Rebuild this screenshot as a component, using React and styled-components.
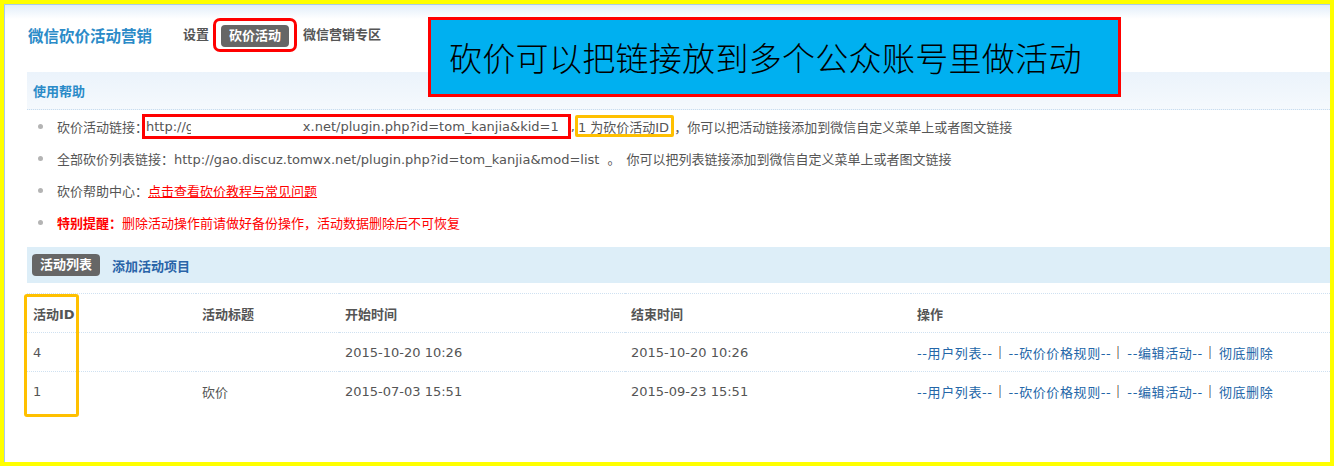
import React from 'react';
import styled, { createGlobalStyle } from 'styled-components';

const GlobalStyle = createGlobalStyle`
    body {
        margin: 0;
        background: #fff;
        font-family: "DejaVu Sans", "Noto Sans CJK SC", sans-serif;
        font-size: 13px;
        color: #555;
    }
`;

const Frame = styled.div`
    width: 1334px;
    height: 466px;
    box-sizing: border-box;
    border: 4px solid #ffff00;
    overflow: hidden;
`;

const Page = styled.div`
    position: relative;
    height: 100%;
    box-sizing: border-box;
    border-left: 1px solid #a9cbe9;
    border-top: 1px solid #a9cbe9;
    background: linear-gradient(#e2eefa, #fff 14px);
`;

const Header = styled.header`
    display: flex;
    align-items: center;
    height: 60px;
    padding-left: 23px;
`;

const Title = styled.h1`
    margin: 0 31px 0 0;
    font-size: 15.5px;
    font-weight: bold;
    color: #2b8bc8;
`;

const Nav = styled.nav`
    display: flex;
    align-items: center;
    gap: 4px;
`;

const NavItem = styled.span`
    font-size: 13px;
    font-weight: bold;
    line-height: 22px;
    height: 22px;
    padding: ${props => (props.active ? '0 8px' : '0')};
    border-radius: 4px;
    color: ${props => (props.active ? '#fff' : '#555')};
    background: ${props => (props.active ? '#666' : 'transparent')};
`;

const Marked = styled.span`
    display: flex;
    padding: 4px 5px 2px 5px;
    margin-left: 0;
    margin-right: 2px;
    border: 3px solid #ff0000;
    border-radius: 7px;
`;

const Callout = styled.div`
    position: absolute;
    left: 423px;
    top: 12px;
    width: 693px;
    height: 80px;
    box-sizing: border-box;
    display: flex;
    align-items: center;
    padding-left: 18px;
    border: 3px solid #ff0000;
    background: #00b0f0;
    color: #000;
    font-family: "Noto Sans CJK SC", sans-serif;
    font-size: 33px;
    font-weight: 300;
    letter-spacing: 0.3px;
`;

const Content = styled.div`
    padding: 7px 0 0 22px;
`;

const SectionBar = styled.div`
    height: 38px;
    box-sizing: border-box;
    display: flex;
    align-items: center;
    padding-left: 6px;
    border-bottom: 1px dotted #c8dcee;
    background: linear-gradient(#ebf3fb, #f5f9fd);
    color: #2b8bc8;
    font-weight: bold;
`;

const HelpList = styled.ul`
    margin: 0;
    padding: 0;
    list-style: none;
`;

const HelpItem = styled.li`
    display: flex;
    align-items: center;
    height: 32px;
    padding-left: 11px;
    white-space: nowrap;

    &::before {
        content: '';
        width: 5px;
        height: 5px;
        margin-right: 14px;
        border-radius: 50%;
        background: #b4b4b4;
    }
`;

const UrlBox = styled.span`
    display: inline-flex;
    align-items: center;
    height: 25px;
    box-sizing: border-box;
    margin-left: -6px;
    padding: 0 9px 0 1px;
    border: 3px solid #ff0000;
`;

const Clip = styled.span`
    display: inline-block;
    width: ${props => props.w}px;
    overflow: hidden;
`;

const Blank = styled.span`
    display: inline-block;
    width: ${props => props.w}px;
`;

const IdBox = styled.span`
    display: inline-flex;
    align-items: center;
    height: 22px;
    box-sizing: border-box;
    padding: 0 2px 0 0;
    border: 3px solid #ffc000;
    border-radius: 2px;
`;

const RedLink = styled.a`
    color: #ff0000;
    text-decoration: underline;
`;

const Warn = styled.span`
    color: #ff0000;
    font-weight: ${props => (props.strong ? 'bold' : 'normal')};
`;

const Gap = styled.span`
    display: inline-block;
    width: ${props => props.w}px;
`;

const TabBar = styled.div`
    display: flex;
    align-items: center;
    gap: 12px;
    height: 36px;
    margin-top: 9px;
    padding-left: 5px;
    background: #ddeef8;
    font-weight: bold;
`;

const Badge = styled.span`
    height: 22px;
    line-height: 22px;
    padding: 0 8px;
    border-radius: 4px;
    background: #666;
    color: #fff;
`;

const TabLink = styled.a`
    color: #2a64a8;
`;

const TableWrap = styled.div`
    position: relative;
    margin-top: 10px;
`;

const Table = styled.table`
    width: 100%;
    border-collapse: collapse;
    table-layout: fixed;
`;

const Cell = styled.td`
    height: 38px;
    padding: 0 0 0 6px;
    border-top: 1px dotted #cfe1f1;
    white-space: nowrap;
    font-weight: ${props => (props.head ? 'bold' : 'normal')};
    color: #555;
`;

const Actions = styled.span`
    display: inline-flex;
    align-items: center;
    letter-spacing: 0.6px;
`;

const Action = styled.a`
    color: #2366a8;
`;

const Sep = styled.span`
    width: 2px;
    height: 13px;
    margin: 0 8px 0 6px;
    background: linear-gradient(to right, #f0b27a 50%, #84b8e6 50%);
`;

const ColumnMark = styled.div`
    position: absolute;
    left: -3px;
    top: 1px;
    width: 55px;
    height: 123px;
    box-sizing: border-box;
    border: 3px solid #ffc000;
    border-radius: 3px;
    pointer-events: none;
`;

const columns = [169, 143, 286, 286, null];

const rows = [
    { id: '4', title: '', start: '2015-10-20 10:26', end: '2015-10-20 10:26' },
    { id: '1', title: '砍价', start: '2015-07-03 15:51', end: '2015-09-23 15:51' }
];

const actionNames = ['--用户列表--', '--砍价价格规则--', '--编辑活动--', '彻底删除'];

const ActionList = () => (
    <Actions>
        {actionNames.map((name, i) => (
            <React.Fragment key={name}>
                {i > 0 && <Sep />}
                <Action>{name}</Action>
            </React.Fragment>
        ))}
    </Actions>
);

const App = () => (
    <>
        <GlobalStyle />
        <Frame>
            <Page>
                <Header>
                    <Title>微信砍价活动营销</Title>
                    <Nav>
                        <NavItem>设置</NavItem>
                        <Marked><NavItem active>砍价活动</NavItem></Marked>
                        <NavItem>微信营销专区</NavItem>
                    </Nav>
                </Header>
                <Callout>砍价可以把链接放到多个公众账号里做活动</Callout>
                <Content>
                    <SectionBar>使用帮助</SectionBar>
                    <HelpList>
                        <HelpItem>
                            砍价活动链接：
                            <UrlBox>
                                http://<Clip w={5}>g</Clip><Blank w={112} />x.net/plugin.php?id=tom_kanjia&amp;kid=1
                            </UrlBox>
                            ,
                            <IdBox>1 为砍价活动ID</IdBox>
                            ，你可以把活动链接添加到微信自定义菜单上或者图文链接
                        </HelpItem>
                        <HelpItem>
                            全部砍价列表链接：http://gao.discuz.tomwx.net/plugin.php?id=tom_kanjia&amp;mod=list<Gap w={8} />。<Gap w={6} />你可以把列表链接添加到微信自定义菜单上或者图文链接
                        </HelpItem>
                        <HelpItem>
                            砍价帮助中心：<RedLink>点击查看砍价教程与常见问题</RedLink>
                        </HelpItem>
                        <HelpItem>
                            <Warn strong>特别提醒：</Warn>
                            <Warn>删除活动操作前请做好备份操作，活动数据删除后不可恢复</Warn>
                        </HelpItem>
                    </HelpList>
                    <TabBar>
                        <Badge>活动列表</Badge>
                        <TabLink>添加活动项目</TabLink>
                    </TabBar>
                    <TableWrap>
                        <Table>
                            <colgroup>
                                {columns.map((w, i) => <col key={i} style={w ? { width: w } : undefined} />)}
                            </colgroup>
                            <tbody>
                                <tr>
                                    <Cell head>活动ID</Cell>
                                    <Cell head>活动标题</Cell>
                                    <Cell head>开始时间</Cell>
                                    <Cell head>结束时间</Cell>
                                    <Cell head>操作</Cell>
                                </tr>
                                {rows.map(row => (
                                    <tr key={row.id}>
                                        <Cell>{row.id}</Cell>
                                        <Cell>{row.title}</Cell>
                                        <Cell>{row.start}</Cell>
                                        <Cell>{row.end}</Cell>
                                        <Cell><ActionList /></Cell>
                                    </tr>
                                ))}
                            </tbody>
                        </Table>
                        <ColumnMark />
                    </TableWrap>
                </Content>
            </Page>
        </Frame>
    </>
);

export default App;
